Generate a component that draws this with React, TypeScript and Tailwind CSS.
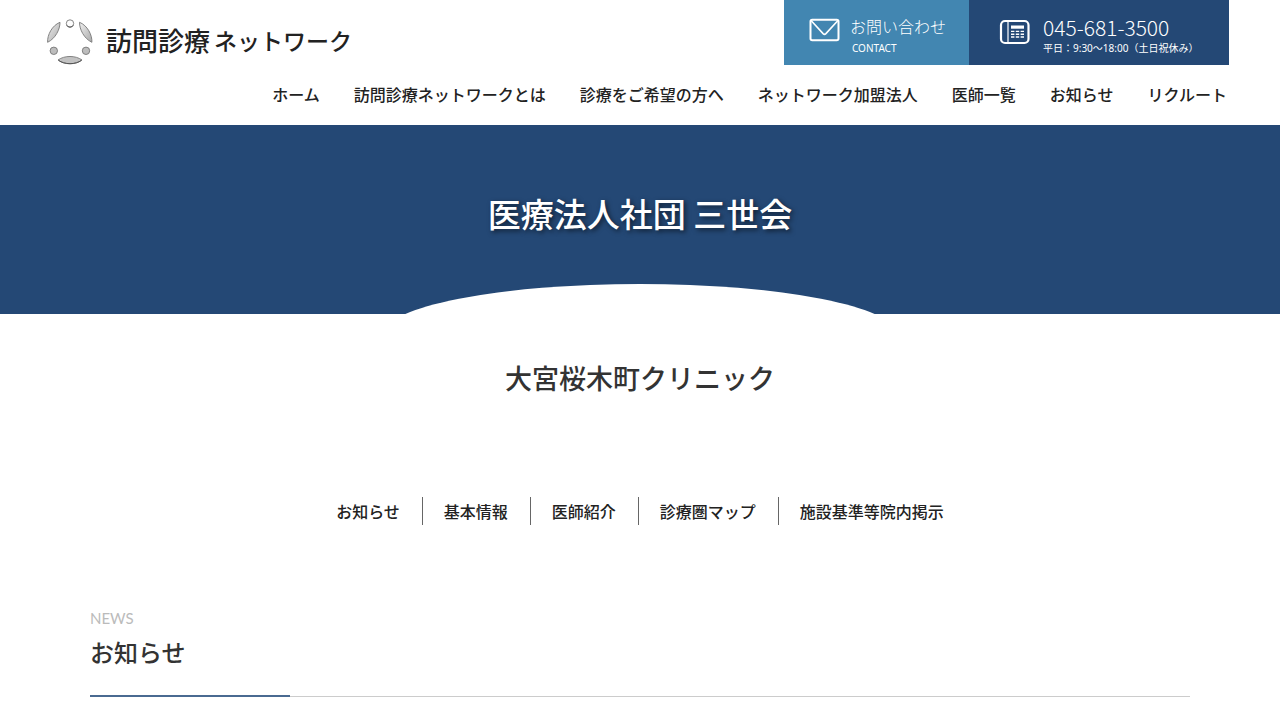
const navItems = [
  "ホーム",
  "訪問診療ネットワークとは",
  "診療をご希望の方へ",
  "ネットワーク加盟法人",
  "医師一覧",
  "お知らせ",
  "リクルート",
];

const sections = [
  { id: "news", label: "お知らせ" },
  { id: "info", label: "基本情報" },
  { id: "doctors", label: "医師紹介" },
  { id: "map", label: "診療圏マップ" },
  { id: "notice", label: "施設基準等院内掲示" },
];

function LogoMark() {
  return (
    <svg width="48" height="48" viewBox="0 0 48 48" aria-hidden="true">
      <defs>
        <linearGradient id="petal" x1="0" y1="0" x2="1" y2="1">
          <stop offset="0" stopColor="#f0f0f0" />
          <stop offset="1" stopColor="#a9a9a9" />
        </linearGradient>
      </defs>
      <g fill="url(#petal)" stroke="#777" strokeWidth="0.9" strokeLinejoin="round">
        <path d="M14 4.300 C14 11.500 9.500 20.500 1.600 24.300 C1.200 17 6 7.500 14 4.300Z" />
        <path d="M33.500 4.300 C33.500 11.500 38 20.500 45.900 24.300 C46.300 17 41.500 7.500 33.500 4.300Z" />
        <path d="M12 42 C18.500 37.300 29.500 37.300 36 42 C29.500 47 18.500 47 12 42Z" fill="#c2c2c2" />
        <circle cx="24" cy="5.500" r="3.700" fill="#fdfdfd" />
        <circle cx="7.800" cy="32.800" r="3.700" fill="#bdbdbd" />
        <circle cx="40" cy="32.800" r="3.700" fill="#bdbdbd" />
      </g>
      <path d="M12.500 42.300 C18.500 46.800 29.500 46.800 35.500 42.300" fill="none" stroke="#555" strokeWidth="1" />
      <path d="M20.800 7.300 A3.700 3.700 0 0 0 27.200 7.300" fill="none" stroke="#555" strokeWidth="1" />
    </svg>
  );
}

function MailIcon() {
  return (
    <svg width="32" height="24" viewBox="0 0 32 24" fill="none" stroke="#fff" strokeWidth="2" strokeLinejoin="round" strokeLinecap="round" aria-hidden="true">
      <rect x="1.500" y="1.800" width="28" height="20.500" rx="1.800" />
      <path d="M2.500 3 L14.100 15.600 Q15.500 17 16.900 15.600 L28.500 3" strokeWidth="1.600" />
    </svg>
  );
}

function PhoneIcon() {
  return (
    <svg width="32" height="26" viewBox="0 0 32 26" fill="none" stroke="#fff" aria-hidden="true">
      <rect x="2" y="2" width="27.500" height="22" rx="4" strokeWidth="2.200" />
      <path d="M9 2.500 V23.500" strokeWidth="1.200" />
      <rect x="12" y="6.500" width="13" height="3.200" fill="#fff" stroke="none" />
      <path d="M12 12.400H25 M12 15.200H25 M12 18H25" strokeWidth="1.400" strokeDasharray="3.400 1.400" />
    </svg>
  );
}

export default function App() {
  return (
    <div className="min-h-screen bg-white font-['Noto_Sans_CJK_JP',sans-serif] font-medium text-[#222]">
      <header className="flex h-[125px] flex-col justify-between pr-[53px] pl-[46px]">
        <div className="-mr-0.5 flex items-start justify-between">
          <a href="#top" className="mt-[18px] flex items-center whitespace-nowrap">
            <LogoMark />
            <span className="pb-1 pl-3 text-[26px] leading-10">訪問診療</span>
            <span className="pb-1 pl-1 text-[23px] leading-10">ネットワーク</span>
          </a>
          <div className="flex h-[65px] text-white">
            <a href="#contact" className="flex w-[185px] items-start gap-[9px] bg-[#4286b1] pt-[18px] pl-[25px]">
              <MailIcon />
              <span className="flex flex-col whitespace-nowrap">
                <span className="text-base leading-4 font-light">お問い合わせ</span>
                <span className="pt-[7px] pl-0.5 font-['Noto_Sans',sans-serif] text-[10px] leading-[14px] font-normal">CONTACT</span>
              </span>
            </a>
            <a href="tel:045-681-3500" className="flex w-[260px] items-start gap-3 bg-[#244875] pt-[19px] pl-[30px]">
              <PhoneIcon />
              <span className="flex flex-col whitespace-nowrap">
                <span className="text-[21px] leading-4 font-light">045-681-3500</span>
                <span className="pt-1.5 font-['Noto_Sans','Noto_Sans_CJK_JP',sans-serif] text-[10px] leading-[14px] font-normal">
                  平日：9:30～18:00（土日祝休み）
                </span>
              </span>
            </a>
          </div>
        </div>
        <nav className="flex justify-end gap-[34px] pb-[19px] text-base leading-6 whitespace-nowrap">
          {navItems.map((item) => (
            <a key={item} href="#top">
              {item}
            </a>
          ))}
        </nav>
      </header>

      <main>
        <div className="relative flex h-[189px] justify-center overflow-hidden bg-[#244875] pt-16">
          <h1 className="text-[33px] leading-[48px] text-white [text-shadow:2px_2px_5px_rgba(0,0,0,0.6)]">医療法人社団 三世会</h1>
          <div className="absolute top-[159px] left-[30%] h-[100px] w-2/5 rounded-[50%] bg-white" />
        </div>

        <h2 className="pt-11 text-center text-[27px] leading-10 text-[#333]">大宮桜木町クリニック</h2>

        <nav className="flex justify-center pt-[99px] text-base leading-7 whitespace-nowrap">
          {sections.map((s) => (
            <a key={s.id} href={`#${s.id}`} className="border-r border-[#666] px-[22px] not-first:pl-[21px] last:border-r-0">
              {s.label}
            </a>
          ))}
        </nav>

        <section id="news" className="mx-auto max-w-[1100px] pt-[81px]">
          <p className="font-['Lato',sans-serif] text-[15px] leading-6 font-normal text-[#bbb]">NEWS</p>
          <h2 className="pt-1 text-2xl leading-9 text-[#333]">お知らせ</h2>
          <div className="mt-[25px] h-0.5 border-b border-[#ccc]">
            <div className="h-0.5 w-[200px] bg-[#4a6a91]" />
          </div>
        </section>
      </main>
    </div>
  );
}
